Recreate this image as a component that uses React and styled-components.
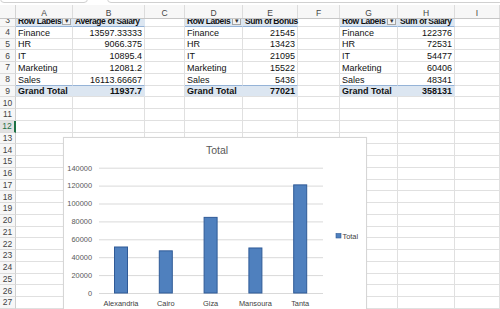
import React from "react";
import styled, { createGlobalStyle } from "styled-components";

const GlobalStyle = createGlobalStyle`
  html, body {
    margin: 0;
    padding: 0;
    background: #ffffff;
  }
  body {
    font-family: "Liberation Sans", Arial, sans-serif;
    overflow: hidden;
  }
`;

const COLS = ["A", "B", "C", "D", "E", "F", "G", "H", "I"];
const TEMPLATE = "16px 57px 72px 40px 58px 55px 42px 58px 57px 1fr";
const ROW_H = 11.75;

const pivots = [
  {
    at: 0,
    head: ["Row Labels", "Average of Salary"],
    rows: [
      ["Finance", "13597.33333"],
      ["HR", "9066.375"],
      ["IT", "10895.4"],
      ["Marketing", "12081.2"],
      ["Sales", "16113.66667"],
    ],
    total: "11937.7",
  },
  {
    at: 3,
    head: ["Row Labels", "Sum of Bonus"],
    rows: [
      ["Finance", "21545"],
      ["HR", "13423"],
      ["IT", "21095"],
      ["Marketing", "15522"],
      ["Sales", "5436"],
    ],
    total: "77021",
  },
  {
    at: 6,
    head: ["Row Labels", "Sum of Salary"],
    rows: [
      ["Finance", "122376"],
      ["HR", "72531"],
      ["IT", "54477"],
      ["Marketing", "60406"],
      ["Sales", "48341"],
    ],
    total: "358131",
  },
];

const cities = [
  { name: "Alexandria", value: 51400 },
  { name: "Cairo", value: 47100 },
  { name: "Giza", value: 84500 },
  { name: "Mansoura", value: 50300 },
  { name: "Tanta", value: 120800 },
];

// what goes in each cell of the sheet
function cellAt(row, col) {
  for (const p of pivots) {
    const side = col - p.at;
    if (side !== 0 && side !== 1) continue;
    if (row === 3) return { text: p.head[side], band: "head", filter: side === 0 };
    if (row >= 4 && row <= 8) {
      return { text: p.rows[row - 4][side], right: side === 1 };
    }
    if (row === 9) return { text: side === 0 ? "Grand Total" : p.total, band: "total", right: side === 1 };
  }
  return { text: "" };
}

export default function App() {
  const rows = [];
  for (let r = 3; r <= 27; r++) rows.push(r);

  return (
    <Page>
      <GlobalStyle />
      <TopStrip>
        <NameBox />
        <FormulaBox />
      </TopStrip>
      <HeaderRow>
        <Corner />
        {COLS.map((c) => (
          <ColHead key={c}>{c}</ColHead>
        ))}
      </HeaderRow>
      <Body>
        <Grid>
          {rows.map((r) => (
            <React.Fragment key={r}>
              <RowHead $active={r === 12}>{r}</RowHead>
              {COLS.map((c, i) => {
                const cell = cellAt(r, i);
                return (
                  <Cell key={c} $band={cell.band} $right={cell.right}>
                    <span>{cell.text}</span>
                    {cell.filter && <FilterButton>▾</FilterButton>}
                  </Cell>
                );
              })}
            </React.Fragment>
          ))}
        </Grid>
      </Body>
      <ChartBox>
        <BarChart />
      </ChartBox>
    </Page>
  );
}

function BarChart() {
  const zeroY = 156;
  const step = 17.9;
  const ticks = [0, 1, 2, 3, 4, 5, 6, 7];
  return (
    <svg width="303" height="180" viewBox="0 0 303 180">
      <text x="154" y="17" fontSize="10.5" fill="#595959" textAnchor="middle" fontFamily="Liberation Sans, Arial, sans-serif">
        Total
      </text>
      {ticks.map((t) => {
        const y = zeroY - t * step;
        return (
          <g key={t}>
            <line x1="36" x2="260" y1={y + 0.5} y2={y + 0.5} stroke="#d9d9d9" strokeWidth="1" />
            <text x="29" y={y + 2.8} fontSize="7.4" fill="#595959" textAnchor="end" fontFamily="Liberation Sans, Arial, sans-serif">
              {t * 20000}
            </text>
          </g>
        );
      })}
      {cities.map((c, i) => {
        const cx = 58 + i * 44.8;
        const h = (c.value / 20000) * step;
        return (
          <g key={c.name}>
            <rect x={cx - 6.5} y={zeroY - h} width="13" height={h} fill="#4f80be" stroke="#2f5a97" strokeWidth="1" />
            <text x={cx} y="169" fontSize="7.4" fill="#404040" textAnchor="middle" fontFamily="Liberation Sans, Arial, sans-serif">
              {c.name}
            </text>
          </g>
        );
      })}
      <rect x="273" y="96.5" width="5" height="4.5" fill="#4f80be" stroke="#2f5a97" strokeWidth="0.6" />
      <text x="279.5" y="101.5" fontSize="7.4" fill="#404040" fontFamily="Liberation Sans, Arial, sans-serif">
        Total
      </text>
    </svg>
  );
}

const Page = styled.div`
  position: relative;
  width: 500px;
  height: 309px;
  overflow: hidden;
  background: #ffffff;
`;

const TopStrip = styled.div`
  height: 5px;
  display: flex;
  gap: 19px;
  overflow: hidden;
`;

const NameBox = styled.div`
  width: 88px;
  height: 20px;
  margin-top: -17px;
  box-sizing: border-box;
  border: 1px solid #d0d0d0;
  border-radius: 4px;
  background: #ffffff;
`;

const FormulaBox = styled(NameBox)`
  flex: 1;
  width: auto;
  margin-right: -8px;
`;

const HeaderRow = styled.div`
  display: grid;
  grid-template-columns: ${TEMPLATE};
  height: 14px;
  box-sizing: border-box;
  border-bottom: 1px solid #c6c6c6;
  background: #f7f7f7;
`;

const Corner = styled.div`
  border-right: 1px solid #d4d4d4;
`;

const ColHead = styled.div`
  display: flex;
  align-items: center;
  justify-content: center;
  font-size: 8.5px;
  color: #444444;
  border-right: 1px solid #dcdcdc;
  padding-top: 2px;
`;

const Body = styled.div`
  height: 290px;
  overflow: hidden;
`;

const Grid = styled.div`
  display: grid;
  grid-template-columns: ${TEMPLATE};
  grid-auto-rows: ${ROW_H}px;
  margin-top: -4px;
`;

const RowHead = styled.div`
  display: flex;
  align-items: center;
  justify-content: center;
  font-size: 8.5px;
  color: ${(p) => (p.$active ? "#1e7145" : "#444444")};
  background: ${(p) => (p.$active ? "#e2e2e2" : "#f7f7f7")};
  box-sizing: border-box;
  border-bottom: 1px solid #dcdcdc;
  border-right: ${(p) => (p.$active ? "2px solid #1e7145" : "1px solid #cfcfcf")};
`;

const Cell = styled.div`
  position: relative;
  display: flex;
  align-items: center;
  justify-content: ${(p) => (p.$right ? "flex-end" : "flex-start")};
  padding: 0 2px;
  box-sizing: border-box;
  overflow: visible;
  white-space: nowrap;
  font-size: ${(p) => (p.$band === "head" ? "8.5px" : "9px")};
  letter-spacing: ${(p) => (p.$band === "head" ? "-0.4px" : "0")};
  color: #111111;
  font-weight: ${(p) => (p.$band ? 700 : 400)};
  background: ${(p) => (p.$band ? "#dce6f1" : "transparent")};
  border-right: 1px solid ${(p) => (p.$band ? "#dce6f1" : "#e0e0e0")};
  border-bottom: 1px solid ${(p) => (p.$band === "head" ? "#95b3d7" : "#e0e0e0")};
  border-top: ${(p) => (p.$band === "total" ? "1px solid #95b3d7" : "none")};
  margin-top: ${(p) => (p.$band === "total" ? "-1px" : "0")};

  span {
    padding-top: 1px;
  }
`;

const FilterButton = styled.div`
  position: absolute;
  right: 1px;
  top: 1px;
  width: 9px;
  height: 9px;
  box-sizing: border-box;
  border: 1px solid #a6a6a6;
  background: #f2f2f2;
  font-size: 7px;
  line-height: 7px;
  letter-spacing: 0;
  text-align: center;
  color: #333333;
  font-weight: 400;
`;

const ChartBox = styled.div`
  position: absolute;
  left: 63px;
  top: 137px;
  width: 304px;
  height: 190px;
  box-sizing: border-box;
  border: 1px solid #d6d6d6;
  background: #ffffff;
  box-shadow: 0 0 1px rgba(0, 0, 0, 0.08);

  svg {
    display: block;
    margin: -1px 0 0 -1px;
  }
`;
